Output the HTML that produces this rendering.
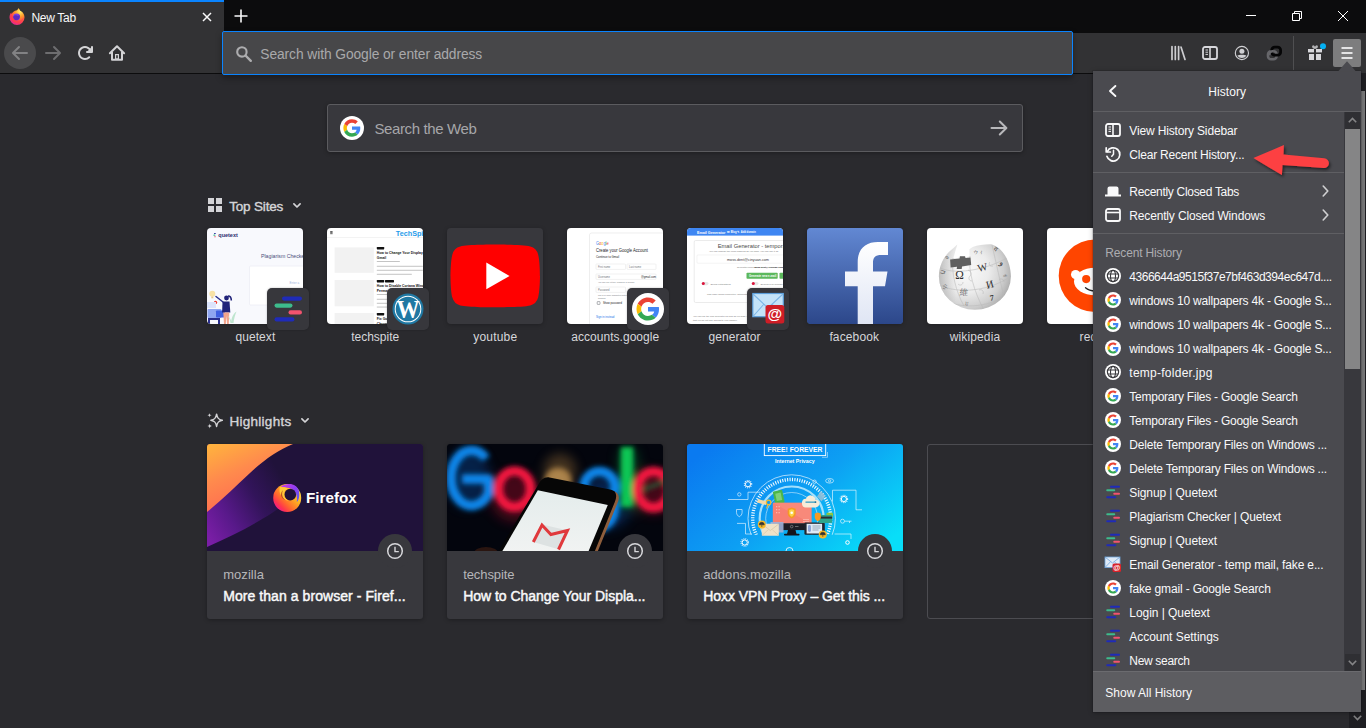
<!DOCTYPE html>
<html lang="en"><head><meta charset="utf-8"><title>New Tab</title>
<style>

html,body{margin:0;padding:0;}
body{width:1366px;height:728px;overflow:hidden;background:#2a2a2e;position:relative;font-family:"Liberation Sans",sans-serif;}
.a{position:absolute;}
.t{position:absolute;white-space:pre;line-height:1;font-family:"Liberation Sans",sans-serif;}
svg{position:absolute;overflow:visible;}

</style></head>
<body>
<!-- new tab page -->
<div class="a" style="left:0px;top:74px;width:1366px;height:654px;background:#2a2a2e;"></div>
<div class="a" style="left:327px;top:104px;width:696px;height:48px;box-sizing:border-box;background:#38383d;border:1px solid #5b5b5f;border-radius:3px;box-shadow:0 1px 4px rgba(0,0,0,.3)"></div>
<svg style="left:340px;top:116px" width="24" height="24" viewBox="0 0 48 48"><circle cx="24" cy="24" r="24" fill="#fff"/><g transform="translate(24 24) scale(0.72) translate(-24 -24)"><path fill="#EA4335" d="M24 9.500c3.540 0 6.710 1.220 9.210 3.600l6.850-6.850C35.900 2.380 30.470 0 24 0 14.620 0 6.510 5.380 2.560 13.220l7.980 6.190C12.430 13.720 17.740 9.500 24 9.500z"/><path fill="#4285F4" d="M46.980 24.550c0-1.570-.15-3.090-.38-4.550H24v9.020h12.940c-.58 2.960-2.260 5.480-4.780 7.180l7.730 6c4.510-4.180 7.090-10.360 7.090-17.650z"/><path fill="#FBBC05" d="M10.530 28.590c-.48-1.450-.76-2.990-.76-4.590s.27-3.140.76-4.590l-7.980-6.190C.92 16.460 0 20.120 0 24c0 3.880.92 7.540 2.560 10.780l7.970-6.190z"/><path fill="#34A853" d="M24 48c6.480 0 11.930-2.130 15.890-5.810l-7.730-6c-2.150 1.450-4.920 2.300-8.160 2.300-6.260 0-11.570-4.220-13.470-9.910l-7.980 6.190C6.510 42.620 14.620 48 24 48z"/></g></svg>
<span class="t" style="left:374.4px;top:120.80px;font-size:15px;color:#a6a6a9;letter-spacing:-0.364px;">Search the Web</span>
<svg style="left:990px;top:120px" width="18" height="16" viewBox="0 0 18 16"><path d="M1.500 8H16M9.800 1.500L16.400 8L9.800 14.500" stroke="#b8b8bb" stroke-width="2" fill="none" stroke-linecap="round" stroke-linejoin="round"/></svg>
<svg style="left:208px;top:198px" width="14" height="14" viewBox="0 0 14 14"><rect x="0" y="0" width="6" height="6" fill="#d4d4d7"/><rect x="8" y="0" width="6" height="6" fill="#d4d4d7"/><rect x="0" y="8" width="6" height="6" fill="#d4d4d7"/><rect x="8" y="8" width="6" height="6" fill="#d4d4d7"/></svg>
<span class="t" style="left:229.2px;top:199.97px;font-size:13.5px;color:#d4d4d7;letter-spacing:-0.170px;-webkit-text-stroke:.4px #d4d4d7;">Top Sites</span>
<svg style="left:292.800px;top:203.200px" width="8" height="5" viewBox="0 0 8 5"><path d="M0.900 0.900L4 4L7.100 0.900" stroke="#d4d4d7" stroke-width="1.700" fill="none" stroke-linecap="round" stroke-linejoin="round"/></svg>
<svg style="left:207px;top:413px" width="16" height="16" viewBox="0 0 16 16"><path d="M9.600 1.200C10.200 5.200 11.500 6.600 15.300 7.300C11.500 8 10.200 9.400 9.600 13.400C9 9.400 7.700 8 3.900 7.300C7.700 6.600 9 5.200 9.600 1.200Z" stroke="#d4d4d7" stroke-width="1.500" fill="none" stroke-linejoin="round"/>
<path d="M2.500 0C2.700 1.500 3.200 2 4.700 2.200C3.200 2.400 2.700 2.900 2.500 4.400C2.300 2.900 1.800 2.400.3 2.200C1.800 2 2.300 1.500 2.500 0Z" fill="#d4d4d7"/><path d="M2.700 10.600C2.900 12.300 3.500 12.800 5.200 13C3.500 13.200 2.900 13.800 2.700 15.500C2.500 13.800 1.900 13.200.2 13C1.900 12.800 2.500 12.300 2.700 10.600Z" fill="#d4d4d7"/></svg>
<span class="t" style="left:229.6px;top:414.97px;font-size:13.5px;color:#d4d4d7;letter-spacing:0.252px;-webkit-text-stroke:.4px #d4d4d7;">Highlights</span>
<svg style="left:301.100px;top:418.100px" width="8" height="5" viewBox="0 0 8 5"><path d="M0.900 0.900L4 4L7.100 0.900" stroke="#d4d4d7" stroke-width="1.700" fill="none" stroke-linecap="round" stroke-linejoin="round"/></svg>
<svg style="left:207px;top:228px;border-radius:4px;overflow:hidden;box-shadow:0 1px 4px rgba(0,0,0,.25);" width="96" height="96" viewBox="207 228 96 96"><rect x="207" y="228" width="96" height="96" fill="#f8f9fd"/>
<rect x="214" y="233" width="1.800" height="1.100" rx=".5" fill="#2a2fa0"/><rect x="213.400" y="234.600" width="2" height="1.100" rx=".5" fill="#3dbb8c"/><rect x="214.200" y="236.200" width="1.600" height="1.100" rx=".5" fill="#f2536f"/>
<text x="218.300" y="236.800" font-family="Liberation Sans, sans-serif" font-weight="700" font-size="6.200" fill="#2b2d6e" textLength="19.500" lengthAdjust="spacingAndGlyphs">quetext</text>
<text x="261" y="257.800" font-family="Liberation Sans, sans-serif" font-size="5.200" fill="#4a4f7c" textLength="45" lengthAdjust="spacingAndGlyphs">Plagiarism Checker</text>
<rect x="249.500" y="266" width="60" height="39" rx="1" fill="#ffffff" stroke="#eceef5" stroke-width=".8"/>
<text x="289.500" y="284.200" font-family="Liberation Sans, sans-serif" font-size="3" fill="#9fb4e0">Enter a</text>
<circle cx="212.300" cy="293.800" r="3" fill="#f8e2a6"/><rect x="211.300" y="296.500" width="2" height="1.800" fill="#e8c98a"/>
<circle cx="215.500" cy="302.500" r="1.700" fill="#ee4035"/>
<rect x="207" y="302" width="9" height="6" fill="#dbe4fb"/><rect x="207.500" y="309" width="14" height="9" rx="1" fill="#8fa6f0"/><rect x="216" y="310.500" width="9" height="7" rx=".8" fill="#3f5fe0"/>
<path d="M208 318h12v6h-2v-4h-8v4h-2z" fill="#2a2f8c"/>
<path d="M216 296.500l7 5.500" stroke="#2a2f8c" stroke-width="1.500" stroke-linecap="round"/>
<circle cx="226.500" cy="298" r="2.400" fill="#22247a"/><path d="M228 296c2 0 3.300 2 3.300 4.500" stroke="#22247a" stroke-width="1.600" fill="none"/>
<path d="M222.500 301.500h7l.8 11h-8.200z" fill="#22247a"/>
<path d="M223.300 312.500h6l-.5 11.500h-1.800l-.6-8-.6 8h-1.800z" fill="#f2a48c"/>
<path d="M231 323c.5-6 2.500-9.500 5.500-11.500-1.500 3.500-2.500 7-3 11.500zM230.500 323c-.5-3.500-1.500-5.500-3-7 2.300 1.200 3.600 3.500 4 7z" fill="#bfe5cf"/>
</svg>
<div class="a" style="left:267px;top:288px;width:42px;height:42px;border-radius:5px;background:#37373c;box-shadow:0 0 2px rgba(0,0,0,.3)"></div>
<svg style="left:272px;top:293px" width="32" height="32" viewBox="0 0 32 32"><rect x="10" y="3.500" width="20" height="4.200" rx="2.100" fill="#1f2bb8"/><rect x="2.500" y="10.500" width="18" height="4.200" rx="2.100" fill="#3dbb8c"/><rect x="16.500" y="17.300" width="13.500" height="4.200" rx="2.100" fill="#f2536f"/><rect x="2.500" y="24.300" width="20" height="4.200" rx="2.100" fill="#1f2bb8"/></svg>
<span class="t" style="left:235.4px;top:331.04px;font-size:12px;color:#d7d7db;letter-spacing:0.089px;">quetext</span>
<svg style="left:327px;top:228px;border-radius:4px;overflow:hidden;box-shadow:0 1px 4px rgba(0,0,0,.25);" width="96" height="96" viewBox="327 228 96 96"><rect x="327" y="228" width="96" height="96" fill="#fff"/>
<path d="M330.200 231.500h2.400M330.200 232.600h2.400M330.200 233.700h2.400" stroke="#222" stroke-width=".7"/>
<text x="395.800" y="235.600" font-family="Liberation Sans, sans-serif" font-weight="700" font-size="7.800" fill="#1f9be9" textLength="34" lengthAdjust="spacingAndGlyphs">TechSpite</text>
<rect x="327" y="237.200" width="96" height=".6" fill="#ececec"/>
<rect x="334.600" y="247.400" width="39.200" height="25.400" fill="#f2f2f2"/><rect x="334.600" y="280" width="39.200" height="26.300" fill="#f2f2f2"/><rect x="334.600" y="313" width="39.200" height="12" fill="#f2f2f2"/>
<rect x="376.800" y="247" width="7.400" height="2.400" rx=".6" fill="#111"/>
<text x="376.800" y="254.300" font-family="Liberation Sans, sans-serif" font-weight="700" font-size="3.400" fill="#111">How to Change Your Display Name in</text>
<text x="376.800" y="258.800" font-family="Liberation Sans, sans-serif" font-weight="700" font-size="3.400" fill="#111">Gmail</text>
<rect x="376.800" y="261" width="23" height="1" fill="#c4c4c4"/>
<rect x="376.800" y="265.800" width="46" height=".9" fill="#bdbdbd"/><rect x="376.800" y="269.800" width="46" height=".9" fill="#bdbdbd"/><rect x="376.800" y="273.800" width="35" height=".9" fill="#bdbdbd"/>
<rect x="376.800" y="280" width="7.400" height="2.400" rx=".6" fill="#111"/><rect x="385" y="280" width="9" height="2.400" rx=".6" fill="#111"/>
<text x="376.800" y="287.300" font-family="Liberation Sans, sans-serif" font-weight="700" font-size="3.400" fill="#111">How to Disable Cortana Windows 10</text>
<text x="376.800" y="291.600" font-family="Liberation Sans, sans-serif" font-weight="700" font-size="3.400" fill="#111">Permanently</text>
<rect x="376.800" y="294" width="12" height="1" fill="#c4c4c4"/>
<rect x="376.800" y="298.800" width="12" height=".9" fill="#bdbdbd"/><rect x="376.800" y="302.800" width="12" height=".9" fill="#bdbdbd"/><rect x="376.800" y="306.600" width="12" height=".9" fill="#bdbdbd"/>
<rect x="376.800" y="313" width="7.400" height="2.400" rx=".6" fill="#111"/>
<text x="376.800" y="320.300" font-family="Liberation Sans, sans-serif" font-weight="700" font-size="3.400" fill="#111">Fix Google</text>
<text x="376.800" y="324.500" font-family="Liberation Sans, sans-serif" font-weight="700" font-size="3.400" fill="#111">Chrome</text>
</svg>
<div class="a" style="left:387px;top:288px;width:42px;height:42px;border-radius:5px;background:#37373c;box-shadow:0 0 2px rgba(0,0,0,.3)"></div>
<svg style="left:392px;top:293px" width="32" height="32" viewBox="0 0 32 32"><circle cx="16" cy="16" r="15.500" fill="#1f78a3"/><circle cx="16" cy="16" r="13.300" fill="#fff"/><circle cx="16" cy="16" r="12.300" fill="#1f78a3"/>
<text x="16" y="25.300" text-anchor="middle" font-family="Liberation Serif, serif" font-weight="700" font-size="25" fill="#fff" textLength="23" lengthAdjust="spacingAndGlyphs">W</text></svg>
<span class="t" style="left:351.2px;top:331.04px;font-size:12px;color:#d7d7db;letter-spacing:-0.003px;">techspite</span>
<svg style="left:447px;top:228px;border-radius:4px;overflow:hidden;box-shadow:0 1px 4px rgba(0,0,0,.25);" width="96" height="96" viewBox="447 228 96 96"><rect x="447" y="228" width="96" height="96" fill="#38383d"/><g transform="translate(450.500 244.600) scale(3.133)"><path fill="#ff0000" d="M27.973 3.123A3.578 3.578 0 0 0 25.447.597C23.220 0 14.285 0 14.285 0S5.350 0 3.123.597A3.578 3.578 0 0 0 .597 3.123C0 5.350 0 10 0 10s0 4.650.597 6.877a3.578 3.578 0 0 0 2.526 2.526C5.350 20 14.285 20 14.285 20s8.935 0 11.162-.597a3.578 3.578 0 0 0 2.526-2.526C28.570 14.650 28.570 10 28.570 10s-.002-4.650-.597-6.877z"/><path fill="#fff" d="M11.425 14.285L18.848 10l-7.423-4.285z"/></g></svg>
<span class="t" style="left:473.2px;top:331.04px;font-size:12px;color:#d7d7db;letter-spacing:0.200px;">youtube</span>
<svg style="left:567px;top:228px;border-radius:4px;overflow:hidden;box-shadow:0 1px 4px rgba(0,0,0,.25);" width="96" height="96" viewBox="567 228 96 96"><rect x="567" y="228" width="96" height="96" fill="#fff"/>
<path d="M589.500 324V235a2 2 0 0 1 2-2H664" stroke="#e6e6e6" stroke-width=".7" fill="none"/>
<text x="596" y="244.600" font-family="Liberation Sans, sans-serif" font-size="4.600" textLength="12.600" lengthAdjust="spacingAndGlyphs"><tspan fill="#4285f4">G</tspan><tspan fill="#ea4335">o</tspan><tspan fill="#fbbc05">o</tspan><tspan fill="#4285f4">g</tspan><tspan fill="#34a853">l</tspan><tspan fill="#ea4335">e</tspan></text>
<text x="596" y="252" font-family="Liberation Sans, sans-serif" font-size="4.500" fill="#202124" textLength="52" lengthAdjust="spacingAndGlyphs">Create your Google Account</text>
<text x="596" y="257.500" font-family="Liberation Sans, sans-serif" font-size="2.900" fill="#202124">Continue to Gmail</text>
<rect x="596" y="264" width="29.500" height="5.400" rx=".6" fill="none" stroke="#e3e3e3" stroke-width=".5"/><rect x="627" y="264" width="29" height="5.400" rx=".6" fill="none" stroke="#e3e3e3" stroke-width=".5"/>
<text x="598" y="267.700" font-family="Liberation Sans, sans-serif" font-size="2.600" fill="#70757a">First name</text><text x="629" y="267.700" font-family="Liberation Sans, sans-serif" font-size="2.600" fill="#70757a">Last name</text>
<rect x="596" y="274" width="60" height="5.400" rx=".6" fill="none" stroke="#e3e3e3" stroke-width=".5"/>
<text x="598" y="277.700" font-family="Liberation Sans, sans-serif" font-size="2.600" fill="#70757a">Username</text><text x="641" y="277.700" font-family="Liberation Sans, sans-serif" font-size="2.700" fill="#202124">@gmail.com</text>
<text x="598" y="282.800" font-family="Liberation Sans, sans-serif" font-size="2.100" fill="#70757a">You can use letters, numbers &amp; periods</text>
<rect x="596" y="287" width="29.500" height="5.400" rx=".6" fill="none" stroke="#e3e3e3" stroke-width=".5"/>
<text x="598" y="290.700" font-family="Liberation Sans, sans-serif" font-size="2.600" fill="#70757a">Password</text>
<text x="598" y="295.800" font-family="Liberation Sans, sans-serif" font-size="2.100" fill="#70757a">Use 8 or more characters with a mix of letters, numbers &amp;</text>
<text x="598" y="298.800" font-family="Liberation Sans, sans-serif" font-size="2.100" fill="#70757a">symbols</text>
<rect x="597.200" y="301.600" width="2.800" height="2.800" rx=".4" fill="none" stroke="#5f6368" stroke-width=".5"/>
<text x="603" y="304" font-family="Liberation Sans, sans-serif" font-size="2.700" fill="#202124">Show password</text>
<text x="596" y="317.500" font-family="Liberation Sans, sans-serif" font-size="2.800" fill="#1a73e8">Sign in instead</text>
</svg>
<div class="a" style="left:627px;top:288px;width:42px;height:42px;border-radius:5px;background:#37373c;box-shadow:0 0 2px rgba(0,0,0,.3)"></div>
<svg style="left:632px;top:293px" width="32" height="32" viewBox="0 0 48 48"><circle cx="24" cy="24" r="24" fill="#fff"/><g transform="translate(24 24) scale(0.72) translate(-24 -24)"><path fill="#EA4335" d="M24 9.500c3.540 0 6.710 1.220 9.210 3.600l6.850-6.850C35.900 2.380 30.470 0 24 0 14.620 0 6.510 5.380 2.560 13.220l7.980 6.190C12.430 13.720 17.740 9.500 24 9.500z"/><path fill="#4285F4" d="M46.980 24.550c0-1.570-.15-3.090-.38-4.550H24v9.020h12.940c-.58 2.960-2.260 5.480-4.780 7.180l7.730 6c4.510-4.180 7.090-10.360 7.090-17.650z"/><path fill="#FBBC05" d="M10.530 28.590c-.48-1.450-.76-2.990-.76-4.590s.27-3.140.76-4.590l-7.980-6.190C.92 16.460 0 20.120 0 24c0 3.880.92 7.540 2.560 10.780l7.970-6.190z"/><path fill="#34A853" d="M24 48c6.480 0 11.930-2.130 15.890-5.810l-7.730-6c-2.150 1.450-4.920 2.300-8.160 2.300-6.260 0-11.570-4.220-13.470-9.910l-7.980 6.190C6.510 42.620 14.620 48 24 48z"/></g></svg>
<span class="t" style="left:571.3px;top:331.04px;font-size:12px;color:#d7d7db;letter-spacing:0.033px;">accounts.google</span>
<svg style="left:687px;top:228px;border-radius:4px;overflow:hidden;box-shadow:0 1px 4px rgba(0,0,0,.25);" width="96" height="96" viewBox="687 228 96 96"><rect x="687" y="228" width="96" height="96" fill="#fff"/>
<rect x="687" y="228" width="96" height="7.600" fill="#3e86f2"/>
<text x="697" y="233.500" font-family="Liberation Sans, sans-serif" font-weight="700" font-size="3.700" fill="#fff">Email Generator</text>
<text x="727" y="233.300" font-family="Liberation Sans, sans-serif" font-weight="700" font-size="2.600" fill="#fff">&#9993; Blog  &#9998; Add domain</text>
<rect x="694.200" y="240.500" width="100" height="62" rx="1.500" fill="#fff" stroke="#e2e2e2" stroke-width=".7"/>
<text x="717.700" y="247.600" font-family="Liberation Sans, sans-serif" font-size="5.700" fill="#4a4a4a" textLength="73" lengthAdjust="spacingAndGlyphs">Email Generator - temporary</text>
<text x="709" y="252" font-family="Liberation Sans, sans-serif" font-size="2.400" fill="#777">You can change the email address as you wish. You can use it as</text>
<rect x="697" y="255" width="94" height="8.200" rx=".8" fill="#fff" stroke="#ececec" stroke-width=".6"/>
<text x="727" y="260.600" font-family="Liberation Sans, sans-serif" font-size="3.300" fill="#333" textLength="42" lengthAdjust="spacingAndGlyphs">moss.dent@cinyuan.com</text>
<text x="737" y="268.400" font-family="Liberation Sans, sans-serif" font-size="2.400" fill="#777">generator.email/<tspan fill="#222" font-weight="700">moss.dent@cinyuan.com</tspan></text>
<rect x="746.500" y="272.800" width="31.200" height="5.900" rx=".8" fill="#5cb85c"/><rect x="779.500" y="272.800" width="12" height="5.900" rx=".8" fill="#5cb85c"/>
<text x="749" y="276.900" font-family="Liberation Sans, sans-serif" font-weight="700" font-size="2.800" fill="#fff">Generate new e-mail</text>
<rect x="701.500" y="282" width="7" height="3.200" rx="1.600" fill="#e6e6e6"/><circle cx="703.300" cy="283.600" r="1.500" fill="#dc143c"/>
<text x="710.500" y="284.500" font-family="Liberation Sans, sans-serif" font-size="2.400" fill="#777">Sound notifications</text>
<rect x="751.500" y="282" width="7" height="3.200" rx="1.600" fill="#e6e6e6"/><circle cx="753.300" cy="283.600" r="1.500" fill="#dc143c"/>
<text x="760.500" y="284.500" font-family="Liberation Sans, sans-serif" font-size="2.400" fill="#777">Second level domain</text>
<text x="707" y="295" font-family="Liberation Sans, sans-serif" font-size="2.400" fill="#777">This page works completely automatically</text>
<text x="693" y="316.800" font-family="Liberation Sans, sans-serif" font-size="2.300" fill="#777">You can use the mail generator as long as you wish, provided</text>
<text x="693" y="320.800" font-family="Liberation Sans, sans-serif" font-size="2.300" fill="#777">that you do not lose access to your mailbox</text>
</svg>
<div class="a" style="left:747px;top:288px;width:42px;height:42px;border-radius:5px;background:#37373c;box-shadow:0 0 2px rgba(0,0,0,.3)"></div>
<svg style="left:752px;top:293px" width="33" height="31" viewBox="752 293 33 31">
<rect x="752.800" y="293.500" width="30.500" height="23.200" fill="#c4e3f8" stroke="#5d9fda" stroke-width="1.200"/>
<path d="M753 294L768 308L783 294M753 316.500L764 304M783 316.500L772 304" stroke="#7db5e6" stroke-width="1.100" fill="none"/>
<rect x="765.500" y="305" width="18.800" height="18.500" rx="2.500" fill="#cf1d26"/>
<text x="774.900" y="319.300" text-anchor="middle" font-family="Liberation Sans, sans-serif" font-weight="700" font-size="15" fill="#fff">@</text></svg>
<span class="t" style="left:708.5px;top:331.04px;font-size:12px;color:#d7d7db;letter-spacing:0.069px;">generator</span>
<svg style="left:807px;top:228px;border-radius:4px;overflow:hidden;box-shadow:0 1px 4px rgba(0,0,0,.25);" width="96" height="96" viewBox="807 228 96 96"><rect x="807" y="228" width="96" height="96" fill="#3b5998"/><defs><linearGradient id="fbg" x1="0" y1="0" x2="0" y2="1"><stop offset="0" stop-color="#6288d3"/><stop offset="1" stop-color="#2c478a"/></linearGradient>
<linearGradient id="fbf" x1="0" y1="0" x2="0" y2="1"><stop offset="0" stop-color="#ffffff"/><stop offset="1" stop-color="#dfe5f4"/></linearGradient></defs>
<rect x="807" y="228" width="96" height="96" fill="url(#fbg)"/>
<path fill="url(#fbf)" d="M857.700 325V286.300H845V271.500H857.700V262C857.700 248.500 866 242 878 242H888V255H881.500C875 255 873 257.500 873 263V271.500H887.500L885 286.300H873V325Z"/></svg>
<span class="t" style="left:829.4px;top:331.04px;font-size:12px;color:#d7d7db;letter-spacing:0.137px;">facebook</span>
<svg style="left:927px;top:228px;border-radius:4px;overflow:hidden;box-shadow:0 1px 4px rgba(0,0,0,.25);" width="96" height="96" viewBox="927 228 96 96"><rect x="927" y="228" width="96" height="96" fill="#fff"/><defs><radialGradient id="wkg" gradientUnits="userSpaceOnUse" cx="966" cy="270" r="50"><stop offset="0" stop-color="#fafafa"/><stop offset="0.450" stop-color="#ececec"/><stop offset="0.750" stop-color="#cfcfcf"/><stop offset="1" stop-color="#a2a2a2"/></radialGradient>
<linearGradient id="wkl" gradientUnits="userSpaceOnUse" x1="938" y1="0" x2="956" y2="0"><stop offset="0" stop-color="#b0b0b0" stop-opacity=".75"/><stop offset="1" stop-color="#b0b0b0" stop-opacity="0"/></linearGradient>
<clipPath id="wkc"><path d="M938.900 276.500C938.900 266 944 255 953 248.500L957.300 244.600L953.400 258H958L959.500 256H965.500L966 257.500L969.400 256V249.200L972.700 247C978 245 985 244 991.300 244.200C1003 247.500 1010.900 262 1010.900 276.500A36 33.300 0 0 1 938.900 276.500Z"/></clipPath></defs>
<g clip-path="url(#wkc)">
<rect x="930" y="236" width="90" height="80" fill="url(#wkg)"/>
<rect x="930" y="236" width="30" height="80" fill="url(#wkl)"/>
<g fill="none" stroke="#b9b9b9" stroke-width=".55">
<path d="M940 268C958 276 992 268 1010 256M939 285C960 295 992 290 1011 276M946 301C965 310 992 306 1008 294"/>
<path d="M970 256C968 270 974 292 984 310M992 245C996 262 1001 286 1005 300M953 258C951 272 956 292 964 306"/>
<path d="M968 270c3 1 4 4 2 6s-1 5 2 5M990 262c-2 2 0 5 3 4M979 290c3-1 5 1 4 4M999 280c2-2 5-1 5 2M958 284c2 2 5 1 5-2"/>
</g>
<path d="M950.100 259.600L959.500 258.600L960 256.300H965L965.500 258L970.500 257.400L971.200 265L962 266.500L961.700 269H956.700L957 266.800L950.600 267.500Z" fill="#606060"/>
<g font-family="Liberation Serif, 'Noto Serif CJK SC', serif" fill="#2e2e2e">
<text x="955.300" y="279.400" font-size="11.500">&#937;</text>
<text x="977.300" y="271" font-size="10.500" transform="rotate(-14 982 267)">W</text>
<text x="985.600" y="287.800" font-size="10.500" transform="rotate(-14 990 283)">&#1048;</text>
<text x="959.500" y="295.300" font-size="8.500" fill="#666" transform="rotate(6 963 293)">&#32173;</text>
<text x="989.800" y="300.500" font-size="8" font-weight="700" transform="rotate(-8 992 297)">7</text>
<text x="973" y="254.500" font-size="5.500" fill="#555" transform="rotate(-6 976 252)">&#12454;&#12451;</text>
<text x="1000.500" y="265.500" font-size="8" fill="#444" transform="rotate(25 1003 262)">&#1608;</text>
<text x="993.500" y="251.500" font-size="6.500" fill="#555" transform="rotate(30 996 249)">&#2357;</text>
<text x="940.500" y="274.500" font-size="6" fill="#666" transform="rotate(-70 943 272)">&#1329;</text>
<text x="942" y="289.500" font-size="6" fill="#666" transform="rotate(-60 945 287)">&#20013;</text>
<text x="944" y="258" font-size="6" fill="#666" transform="rotate(-50 947 256)">&#3592;</text>
<text x="1004" y="278" font-size="6" fill="#777" transform="rotate(70 1006 276)">&#3221;</text>
<text x="965" y="305.500" font-size="6" fill="#777" transform="rotate(10 968 304)">&#1506;</text>
</g></g></svg>
<span class="t" style="left:949.8px;top:331.04px;font-size:12px;color:#d7d7db;letter-spacing:0.116px;">wikipedia</span>
<svg style="left:1047px;top:228px;border-radius:4px;overflow:hidden;box-shadow:0 1px 4px rgba(0,0,0,.25);" width="96" height="96" viewBox="1047 228 96 96"><rect x="1047" y="228" width="96" height="96" fill="#fff"/><circle cx="1095" cy="275.800" r="36.300" fill="#ff4500"/>
<circle cx="1075.600" cy="274.600" r="4.600" fill="#fff"/>
<ellipse cx="1095" cy="281.500" rx="21" ry="13.800" fill="#fff"/>
<circle cx="1086.200" cy="279.100" r="4.100" fill="#ff4500"/>
<path d="M1085.500 287.800c2.500 2.200 6 3.200 9.500 3.200" stroke="#222" stroke-width="1.300" fill="none" stroke-linecap="round"/></svg>
<span class="t" style="left:1079.6px;top:331.04px;font-size:12px;color:#d7d7db;letter-spacing:0.128px;">reddit</span>
<div class="a" style="left:207px;top:444px;width:216px;height:175px;border-radius:3px;background:#38383d;box-shadow:0 1px 4px rgba(0,0,0,.3)"></div>
<div class="a" style="left:447px;top:444px;width:216px;height:175px;border-radius:3px;background:#38383d;box-shadow:0 1px 4px rgba(0,0,0,.3)"></div>
<div class="a" style="left:687px;top:444px;width:216px;height:175px;border-radius:3px;background:#38383d;box-shadow:0 1px 4px rgba(0,0,0,.3)"></div>
<div class="a" style="left:927px;top:444px;width:216px;height:175px;box-sizing:border-box;border-radius:3px;border:1px solid #4c4c51"></div>
<svg style="left:207px;top:444px;border-radius:3px 3px 0 0;overflow:hidden" width="216" height="107" viewBox="207 444 216 107"><defs>
<linearGradient id="c1o" x1="0" y1="0" x2="0.550" y2="1"><stop offset="0" stop-color="#ffb53d"/><stop offset="0.45" stop-color="#ff8a4d"/><stop offset="1" stop-color="#ff6252"/></linearGradient>
<linearGradient id="c1p" gradientUnits="userSpaceOnUse" x1="207" y1="535" x2="288" y2="487"><stop offset="0" stop-color="#7a1ea6"/><stop offset="0.300" stop-color="#58198a"/><stop offset="0.650" stop-color="#32145a"/><stop offset="1" stop-color="#20123a"/></linearGradient>
<filter id="c1b" filterUnits="userSpaceOnUse" x="170" y="410" width="190" height="150"><feGaussianBlur stdDeviation="6"/></filter>
<linearGradient id="fxl" gradientUnits="userSpaceOnUse" x1="298" y1="488" x2="277" y2="509"><stop offset="0" stop-color="#ffe24a"/><stop offset="0.350" stop-color="#ffae22"/><stop offset="0.650" stop-color="#ff6a2c"/><stop offset="0.850" stop-color="#ff3350"/><stop offset="1" stop-color="#f2198c"/></linearGradient>
<linearGradient id="fxp" gradientUnits="userSpaceOnUse" x1="282" y1="485" x2="299" y2="500"><stop offset="0" stop-color="#c63ae6"/><stop offset="0.550" stop-color="#8a3df2"/><stop offset="1" stop-color="#5a5cf0"/></linearGradient>
</defs>
<rect x="207" y="444" width="216" height="107" fill="#20123a"/>
<path d="M207 547C232 536 255 524 272 513C290 501 300 488 312 470L320 444H207Z" fill="url(#c1p)"/>
<path d="M207 512C222 500 236 486 250 473C264 460 278 450 293 444H207Z" fill="url(#c1o)"/>
<circle cx="287.200" cy="498" r="14" fill="url(#fxl)"/>
<path d="M280.500 486.800C285 483.400 291.500 483.200 295.500 486C299 488.600 300 493 299 497.800C298.500 499.800 297.800 501 296.800 502C297.400 497.500 296.600 493 293.500 490.200C290 487.300 285 487.600 280.500 486.800Z" fill="url(#fxp)"/>
<circle cx="290.200" cy="494.700" r="5.900" fill="#20123a"/>
<path d="M280 486.800C283 487 285.800 487.400 287.800 488.600C285.600 489.700 284.200 491.800 284.300 494.300C284.400 497.300 286.300 499.800 289 500.700C285.500 500.800 282.300 498.300 282 494.500C281.900 493 282.200 491.600 282.800 490.400C281.600 491.600 280.900 493.400 281 495.500C279.300 492.800 279.100 489.500 280 486.800Z" fill="#ffc838"/>
<path d="M282.900 490.300C282.300 491.600 282 493 282.100 494.500C282.300 497 283.600 499 285.500 500.100C283.500 499.600 281.500 497.800 281 495.500C280.900 493.500 281.600 491.600 282.900 490.300Z" fill="#7a2a20" opacity=".55"/>
<text x="306" y="503.300" font-family="Liberation Sans, sans-serif" font-weight="700" font-size="15.300" fill="#fff" textLength="50.700" lengthAdjust="spacingAndGlyphs">Firefox</text></svg>
<svg style="left:447px;top:444px;border-radius:3px 3px 0 0;overflow:hidden" width="216" height="107" viewBox="447 444 216 107"><defs><filter id="bl" x="-20%" y="-20%" width="140%" height="140%"><feGaussianBlur stdDeviation="2.900"/></filter>
<filter id="bl2" x="-40%" y="-40%" width="180%" height="180%"><feGaussianBlur stdDeviation="6"/></filter>
<linearGradient id="scr" x1="0" y1="0" x2="0" y2="1"><stop offset="0" stop-color="#e4ecec"/><stop offset="1" stop-color="#f1f3f2"/></linearGradient></defs>
<rect x="447" y="444" width="216" height="107" fill="#03050d"/>
<g filter="url(#bl2)" opacity=".38"><ellipse cx="468" cy="478" rx="22" ry="30" fill="#0a4fa8"/><circle cx="515" cy="497" r="25" fill="#b0102c"/><circle cx="606" cy="502" r="27" fill="#0a50b0"/><circle cx="653" cy="492" r="22" fill="#b0102c"/><rect x="618" y="450" width="20" height="60" fill="#008838"/><circle cx="560" cy="470" r="16" fill="#b08040"/></g>
<g filter="url(#bl)" fill="none" stroke-linecap="butt">
<path d="M486 458.500A20.500 27.500 0 1 0 488.500 493.500V479H462" stroke="#0b86ea" stroke-width="9.500" stroke-linejoin="round"/>
<ellipse cx="514.500" cy="489" rx="16" ry="18" stroke="#f3153f" stroke-width="9.500"/>
<circle cx="558" cy="481.500" r="12" fill="#c89a58" stroke="#b88a4a" stroke-width="4" opacity=".8"/>
<circle cx="599.500" cy="487" r="15.500" stroke="#0b86ea" stroke-width="9.500"/>
<path d="M613 500C617 512 612 524 600 528" stroke="#0b86ea" stroke-width="9.500"/>
<path d="M627 447V507" stroke="#07c654" stroke-width="12.500"/>
<ellipse cx="653.500" cy="489.500" rx="16" ry="18" stroke="#f3153f" stroke-width="9.500"/>
<path d="M642 490L666 481" stroke="#2a5a34" stroke-width="4"/>
</g>
<path d="M498 552L538.500 484.500C541 479.500 544.500 476.500 549.500 477.400L610 489.500C617 491 619.500 495.500 617 502L596 552Z" fill="#060606"/>
<path d="M614.500 491.500C619 493.500 620 497.500 617.500 503L597.500 552H594.500L615 501.500C616.800 497 616.300 493.500 614.500 491.500Z" fill="#8d5d3c"/>
<path d="M501.800 552L537.800 490.200L607.800 505L588.200 552Z" fill="url(#scr)"/>
<path d="M542 524.500L568 530.500L558.500 549.300L533.300 542Z" fill="#dde2e2"/>
<path d="M533.300 542L542 525L550.900 534.500L567.500 530.500L558.500 549.500" stroke="#e0393c" stroke-width="3" fill="none" stroke-linejoin="miter" stroke-miterlimit="3"/>
<ellipse cx="486" cy="553" rx="12" ry="6" fill="#2a1510"/></svg>
<svg style="left:687px;top:444px;border-radius:3px 3px 0 0;overflow:hidden" width="216" height="107" viewBox="687 444 216 107"><defs><linearGradient id="c3g" x1="0" y1="0.200" x2="1" y2="0.800"><stop offset="0" stop-color="#0a7af0"/><stop offset="0.500" stop-color="#0d9ff3"/><stop offset="1" stop-color="#08def8"/></linearGradient>
<clipPath id="dial"><rect x="740" y="470" width="104" height="64.800"/></clipPath></defs>
<rect x="687" y="444" width="216" height="107" fill="url(#c3g)"/>
<rect x="764.300" y="441" width="61.400" height="14.600" fill="none" stroke="#fff" stroke-width=".9"/>
<path d="M827.500 452V457.300H822" stroke="#fff" stroke-width=".6" fill="none" opacity=".8"/>
<text x="767.500" y="452" font-family="Liberation Sans, sans-serif" font-weight="700" font-size="6.400" fill="#fff" textLength="55" lengthAdjust="spacingAndGlyphs">FREE!  FOREVER</text>
<text x="775" y="463" font-family="Liberation Sans, sans-serif" font-weight="700" font-size="4.800" fill="#fff" textLength="39.600" lengthAdjust="spacingAndGlyphs">Internet Privacy</text>
<g clip-path="url(#dial)" fill="none">
<circle cx="791.700" cy="518.500" r="43.700" stroke="#fff" stroke-width=".7" opacity=".9"/>
<circle cx="791.700" cy="518.500" r="39" stroke="#fff" stroke-width="3.400" stroke-dasharray="1.100 1.350" opacity=".95"/>
<circle cx="791.700" cy="518.500" r="32" stroke="#c9f0ff" stroke-width="2.200" opacity=".8"/>
<circle cx="791.700" cy="518.500" r="26" stroke="#fff" stroke-width=".7" opacity=".7"/>
</g>
<g fill="none" stroke="#fff" stroke-width=".7" opacity=".85">
<path d="M728 499.500H748V492.200H760M737 523.400H745.500V534H752M832.500 501.600V490.200H856V509.800H862M834.600 534H851V539"/>
<circle cx="739.300" cy="494.400" r="1.700"/><circle cx="814.600" cy="481.700" r="1.700"/>
<ellipse cx="829.600" cy="480.800" rx="4" ry="2.300"/><circle cx="829.600" cy="480.800" r="1.100"/>
<path d="M736.500 509.500h5.600v3c0 2-1.400 3.600-2.800 4.200-1.400-.6-2.800-2.200-2.800-4.200z"/>
<circle cx="842.500" cy="521.200" r="2"/><path d="M844.500 521.200H851.500M849.500 521.200V523"/>
</g>
<g fill="none" stroke="#fff" stroke-width="1"><circle cx="748" cy="484.200" r="2.600"/><circle cx="843.900" cy="499" r="2.600"/><circle cx="744.700" cy="542.500" r="2.600"/><circle cx="847.500" cy="542.500" r="1.800"/></g>
<g fill="none" stroke="#fff" stroke-width="1.100" stroke-dasharray=".9 1.060" opacity=".95"><circle cx="748" cy="484.200" r="3.700"/><circle cx="843.900" cy="499" r="3.700"/><circle cx="744.700" cy="542.500" r="3.700"/></g>
<rect x="774" y="490.500" width="9.500" height="13" rx="1" fill="#4cb648" transform="rotate(-12 779 497)"/><rect x="776" y="493" width="5.500" height="7.500" fill="#7fd07a" transform="rotate(-12 779 497)"/>
<path d="M758 499l9 2.500-1 3.500-9-2.500z" fill="#f3d9a8"/><circle cx="768.600" cy="502.400" r="2.200" fill="none" stroke="#f5b92a" stroke-width="1.200"/><path d="M768 504.500l-1.500 4" stroke="#f5b92a" stroke-width="1.100"/>
<path d="M821 491l4.500 5-4 5.500-4.500-5z" fill="#8fbfd8" opacity=".9"/>
<rect x="772.800" y="502.800" width="38.700" height="21" rx="1" fill="#f77f72"/><path d="M772.800 502.800h38.700v21z" fill="#f98f80" opacity=".6"/>
<g fill="#fbb4aa"><rect x="776" y="506" width="1.300" height="1.300"/><rect x="778.500" y="506" width="1.300" height="1.300"/><rect x="776" y="509" width="1.300" height="1.300"/><rect x="778.500" y="509" width="1.300" height="1.300"/><rect x="776" y="512" width="1.300" height="1.300"/><rect x="778.500" y="512" width="1.300" height="1.300"/><rect x="803" y="519" width="6" height=".9"/><rect x="803" y="521" width="6" height=".9"/></g>
<path d="M787.700 508.800l4-1.300 4 1.300v4.600c0 2.400-1.900 4.200-4 5.200-2.100-1-4-2.800-4-5.200z" fill="#f59a23"/><path d="M789.200 510l2.500-.8 2.500.8v3.300c0 1.600-1.200 2.800-2.500 3.500-1.300-.7-2.500-1.900-2.500-3.500z" fill="#fbd34a"/><circle cx="791.700" cy="512.800" r="1.300" fill="#fff"/>
<rect x="772.800" y="523.300" width="38.700" height="6.800" fill="#1d1e26"/><circle cx="791.700" cy="526.600" r="1.300" fill="none" stroke="#aaa" stroke-width=".5"/><rect x="795" y="526.200" width="3.500" height=".7" fill="#888"/>
<path d="M788 530h7.500l1 4h-9.500z" fill="#15161c"/><rect x="784" y="533.800" width="15.500" height="1.700" rx=".8" fill="#15161c"/>
<g transform="translate(0.500 -2.200)"><path d="M801.500 504.500c0-2.300 1.900-3.900 4-3.600.7-2.200 2.900-3.600 5.200-3.300 2.400.3 4.200 2.100 4.500 4.400 2.100.1 3.700 1.800 3.700 3.800 0 2.100-1.700 3.800-3.900 3.800h-10c-2 0-3.500-1.500-3.500-3.400z" fill="#f6ecd9"/><rect x="805" y="503.700" width="10" height="1.300" fill="#3b9fc4"/><circle cx="815" cy="504.300" r=".9" fill="#1d6f94"/></g>
<rect x="770.500" y="522" width="13" height="10.500" fill="#9fb0d8" opacity=".9"/>
<rect x="761.800" y="523.700" width="17" height="12" rx=".8" fill="#efe2c8"/><path d="M761.800 524l8.500 6.500 8.500-6.500" stroke="#d6c4a2" stroke-width=".7" fill="none"/><path d="M761.800 535.700l6.500-6M778.800 535.700l-6.500-6" stroke="#d6c4a2" stroke-width=".6"/>
<rect x="804.400" y="522.500" width="20.400" height="12.300" rx="1.200" fill="#22252e"/><rect x="806.600" y="523.800" width="15.500" height="9.700" fill="#dfe9f5"/><rect x="808" y="525" width="3" height="7" rx="1.400" fill="#8fa6d8"/><rect x="812.500" y="525.500" width="8" height="1" fill="#9ab"/><rect x="812.500" y="527.500" width="8" height="1" fill="#9ab"/><rect x="812.500" y="529.500" width="6" height="1" fill="#9ab"/>
<rect x="826.500" y="512.800" width="6.500" height="4" rx=".8" fill="#8cc63f"/><rect x="818.800" y="515" width="13.400" height="8" rx=".9" fill="#2fa58c"/><rect x="818.800" y="516.600" width="13.400" height="2" fill="#2a2d36"/>
<path d="M814.800 513.500l3-1 3 1v3.800c0 1.900-1.500 3.300-3 4-1.500-.7-3-2.100-3-4z" fill="#f59a23"/>
<circle cx="761.800" cy="524.600" r="4" fill="#f5b92a"/><path d="M759.300 524.800a2.500 2.500 0 0 1 5 0zM761.800 524.800v2.200" stroke="#333" stroke-width=".6" fill="#333"/>
<circle cx="822.800" cy="534.500" r="4" fill="#f5b92a"/><path d="M820.300 534.700a2.500 2.500 0 0 1 5 0zM822.800 534.700v2.200" stroke="#333" stroke-width=".6" fill="#333"/>
<path d="M786 551a3.500 3.500 0 0 1 7 0" stroke="#fff" stroke-width=".8" fill="none"/></svg>
<div class="a" style="left:378px;top:534px;width:34px;height:34px;border-radius:50%;background:#38383d;clip-path:inset(0 0 0 0)"></div><svg style="left:386px;top:542px" width="18" height="18" viewBox="0 0 18 18"><circle cx="9" cy="9" r="7.300" stroke="#d7d7db" stroke-width="1.500" fill="none"/><path d="M9 4.800V9.600H12.800" stroke="#d7d7db" stroke-width="1.400" fill="none"/></svg>
<div class="a" style="left:618px;top:534px;width:34px;height:34px;border-radius:50%;background:#38383d;clip-path:inset(0 0 0 0)"></div><svg style="left:626px;top:542px" width="18" height="18" viewBox="0 0 18 18"><circle cx="9" cy="9" r="7.300" stroke="#d7d7db" stroke-width="1.500" fill="none"/><path d="M9 4.800V9.600H12.800" stroke="#d7d7db" stroke-width="1.400" fill="none"/></svg>
<div class="a" style="left:858px;top:534px;width:34px;height:34px;border-radius:50%;background:#38383d;clip-path:inset(0 0 0 0)"></div><svg style="left:866px;top:542px" width="18" height="18" viewBox="0 0 18 18"><circle cx="9" cy="9" r="7.300" stroke="#d7d7db" stroke-width="1.500" fill="none"/><path d="M9 4.800V9.600H12.800" stroke="#d7d7db" stroke-width="1.400" fill="none"/></svg>
<span class="t" style="left:223.2px;top:568.30px;font-size:13px;color:#b6b6b9;letter-spacing:0.047px;">mozilla</span>
<span class="t" style="left:223.2px;top:589.15px;font-size:14px;color:#f9f9fa;letter-spacing:0.066px;-webkit-text-stroke:.45px #f9f9fa;">More than a browser - Firef...</span>
<span class="t" style="left:463.2px;top:568.30px;font-size:13px;color:#b6b6b9;letter-spacing:-0.094px;">techspite</span>
<span class="t" style="left:463.2px;top:589.15px;font-size:14px;color:#f9f9fa;letter-spacing:-0.025px;-webkit-text-stroke:.45px #f9f9fa;">How to Change Your Displa...</span>
<span class="t" style="left:703.2px;top:568.30px;font-size:13px;color:#b6b6b9;letter-spacing:0.077px;">addons.mozilla</span>
<span class="t" style="left:703.2px;top:589.15px;font-size:14px;color:#f9f9fa;letter-spacing:-0.063px;-webkit-text-stroke:.45px #f9f9fa;">Hoxx VPN Proxy – Get this ...</span>
<!-- browser chrome -->
<div class="a" style="left:0px;top:0px;width:1366px;height:33px;background:#0c0c0d;"></div>
<div class="a" style="left:0px;top:33px;width:1366px;height:41px;background:#323234;border-bottom:1px solid #0c0c0d;box-sizing:border-box;"></div>
<div class="a" style="left:0px;top:0px;width:224px;height:33px;background:#323234;border-top:2px solid #0a84ff;box-sizing:border-box;"></div>
<svg style="left:9px;top:8px" width="16" height="17" viewBox="0 0 16 17">
<defs><radialGradient id="ffg" cx="0.7" cy="0.2" r="0.9"><stop offset="0" stop-color="#fff36b"/><stop offset="0.35" stop-color="#ff9a2a"/><stop offset="0.7" stop-color="#ff3e4e"/><stop offset="1" stop-color="#e5259a"/></radialGradient></defs>
<path d="M8 2.2c1-.9 1.3-1.7 1.4-2.2 1 .9 1.6 2 1.8 2.8 1.500 .3 4.300 2.800 4.300 6.700a7.500 7.500 0 0 1-15 0c0-2.300.9-4.100 1.700-5 .1.700.3 1.200.6 1.600C3.300 4.300 5 2.600 8 2.200z" fill="url(#ffg)"/>
<circle cx="7.6" cy="9" r="3.4" fill="#7b3fe4"/><path d="M4.200 8.800c.8-1.500 2.400-1.800 3.600-1.300 1.200.5 2.300.2 2.800-.4.700 2.400-.800 5.200-3.600 5.200-2 0-3.200-1.600-2.800-3.500z" fill="#5b2bbf"/>
<path d="M1.200 8.500c.5 3.600 3.300 6.000 6.800 6.000 3.600 0 6.400-2.400 7-5.500-1 2.300-3 3.800-5.800 3.800-3.200 0-5.200-2-5.400-4.600-.5-.6-1.800-.6-2.600.3z" fill="#ff3e4e" opacity=".85"/>
</svg>
<span class="t" style="left:31.4px;top:12.14px;font-size:12px;color:#f9f9fa;letter-spacing:-0.298px;">New Tab</span>
<svg style="left:202px;top:12px" width="10" height="10" viewBox="0 0 10 10"><path d="M1 1L9 9M9 1L1 9" stroke="#f9f9fa" stroke-width="1.5" fill="none"/></svg>
<svg style="left:234px;top:9px" width="14" height="14" viewBox="0 0 14 14"><path d="M7 0.500V13.500M0.500 7H13.500" stroke="#f9f9fa" stroke-width="1.6" fill="none"/></svg>
<svg style="left:1246px;top:11px" width="10" height="10" viewBox="0 0 10 10"><path d="M0 4.500H10" stroke="#fff" stroke-width="1"/></svg>
<svg style="left:1292px;top:11px" width="10" height="10" viewBox="0 0 10 10"><path d="M0.500 2.500H7.500V9.500H0.500ZM2.500 2.500V0.500H9.500V7.500H7.500" stroke="#fff" stroke-width="1" fill="none"/></svg>
<svg style="left:1338px;top:11px" width="10" height="10" viewBox="0 0 10 10"><path d="M0 0L10 10M10 0L0 10" stroke="#fff" stroke-width="1" fill="none"/></svg>
<div class="a" style="left:4px;top:37px;width:32px;height:32px;border-radius:50%;background:#4a4a4c"></div>
<svg style="left:12px;top:45px" width="16" height="16" viewBox="0 0 16 16"><path fill="#828284" d="M15 7H3.414l4.293-4.293a1 1 0 0 0-1.414-1.414l-6 6a1 1 0 0 0 0 1.414l6 6a1 1 0 0 0 1.414-1.414L3.414 9H15a1 1 0 0 0 0-2z"/></svg>
<svg style="left:45px;top:45px" width="16" height="16" viewBox="0 0 16 16"><path fill="#6e6e70" transform="translate(16 0) scale(-1 1)" d="M15 7H3.414l4.293-4.293a1 1 0 0 0-1.414-1.414l-6 6a1 1 0 0 0 0 1.414l6 6a1 1 0 0 0 1.414-1.414L3.414 9H15a1 1 0 0 0 0-2z"/></svg>
<svg style="left:77.300px;top:45px" width="16" height="16" viewBox="0 0 16 16"><path fill="#d4d4d6" d="M15 1a1 1 0 0 0-1 1v2.418A6.995 6.995 0 1 0 8 15a6.954 6.954 0 0 0 4.950-2.050 1 1 0 0 0-1.414-1.414A5.019 5.019 0 1 1 12.549 6H10a1 1 0 0 0 0 2h5a1 1 0 0 0 1-1V2a1 1 0 0 0-1-1z"/><path d="M15.300 1.200V7.300H9.500Z" fill="#d4d4d6"/></svg>
<svg style="left:109px;top:45px" width="16" height="16" viewBox="0 0 16 16"><path d="M0.900 8.200L8 1.200L15.100 8.200" stroke="#d4d4d6" stroke-width="2" fill="none" stroke-linecap="round" stroke-linejoin="round"/><path d="M3 7V14.700H13V7" stroke="#d4d4d6" stroke-width="2" fill="none" stroke-linejoin="round"/><rect x="6.600" y="9.600" width="2.800" height="4.300" stroke="#d4d4d6" stroke-width="1.200" fill="none"/></svg>
<div class="a" style="left:222px;top:31px;width:851px;height:44px;box-sizing:border-box;background:#474749;border:1px solid #0a84ff;border-radius:2px;box-shadow:0 3px 6px rgba(0,0,0,.35)"></div>
<svg style="left:236px;top:46px" width="16" height="16" viewBox="0 0 16 16"><circle cx="5.900" cy="5.900" r="4.700" stroke="#adadaf" stroke-width="2.100" fill="none"/><path d="M9.500 9.500L14.800 14.800" stroke="#adadaf" stroke-width="2.400" stroke-linecap="round"/></svg>
<span class="t" style="left:260.3px;top:48.22px;font-size:13.8px;color:#a9a9ab;letter-spacing:-0.081px;">Search with Google or enter address</span>
<svg style="left:1170px;top:45px" width="16" height="16" viewBox="0 0 16 16"><path d="M2 1.500V14.500M5.300 1.500V14.500M8.600 1.500V14.500M11 2L15 14.500" stroke="#cdcdd0" stroke-width="1.700" fill="none" stroke-linecap="round"/></svg>
<svg style="left:1202px;top:46px" width="16" height="14" viewBox="0 0 16 14"><rect x="1" y="1" width="14" height="12" rx="2" stroke="#d7d7db" stroke-width="1.800" fill="none"/><path d="M8 1V13" stroke="#d7d7db" stroke-width="1.600"/><path d="M3.500 4H6M3.500 6.200H6M3.500 8.400H6" stroke="#d7d7db" stroke-width="1"/></svg>
<svg style="left:1234px;top:45px" width="16" height="16" viewBox="0 0 16 16"><circle cx="7.900" cy="8" r="6.600" stroke="#d0d0d3" stroke-width="1.100" fill="none"/><circle cx="7.900" cy="6.300" r="2.500" fill="#d0d0d3"/><path d="M3.400 10.700C5 9.300 10.800 9.300 12.400 10.700A5.400 5.400 0 0 1 3.400 10.700Z" fill="#d0d0d3"/></svg>
<svg style="left:1266px;top:45px" width="17" height="16" viewBox="0 0 17 16"><rect x="2" y="6.200" width="8.600" height="8.100" rx="3" stroke="#66666a" stroke-width="2.600" fill="none"/><rect x="5.700" y="2.100" width="8.900" height="8.100" rx="3" stroke="#050506" stroke-width="2.800" fill="none"/><path d="M3.300 10.300V9.200A3 3 0 0 1 6.300 6.200H7.500" stroke="#66666a" stroke-width="2.600" fill="none"/></svg>
<div class="a" style="left:1293px;top:36px;width:1px;height:34px;background:#4f4f51;"></div>
<svg style="left:1307px;top:44px" width="18" height="18" viewBox="0 0 18 18"><rect x="1" y="5" width="6" height="3.400" fill="#d7d7db"/><rect x="9" y="5" width="6" height="3.400" fill="#d7d7db"/><rect x="2" y="10" width="5" height="6" fill="#d7d7db"/><rect x="9" y="10" width="5" height="6" fill="#d7d7db"/><path d="M8 5C5.500 4.600 4.600 3 5.300 1.800 6.200 0.500 7.600 1.500 8 3 8.400 1.500 9.800 0.500 10.700 1.800 11.400 3 10.500 4.600 8 5Z" fill="#b4b4b6"/><circle cx="16" cy="2.300" r="3" fill="#04b0f3"/></svg>
<div class="a" style="left:1333px;top:39px;width:28px;height:28px;border-radius:2px;background:#7d7d7e"></div>
<svg style="left:1340px;top:46px" width="14" height="14" viewBox="0 0 14 14"><path d="M1.500 2H12.500M1.500 7H12.500M1.500 12H12.500" stroke="#e4e4e5" stroke-width="1.900" stroke-linecap="butt"/></svg>
<!-- history panel -->
<div class="a" style="left:1349px;top:73px;width:17px;height:655px;background:#1e1e22;"></div>
<div class="a" style="left:1351px;top:91px;width:14px;height:599px;background:#79797a;"></div>
<svg style="left:1353px;top:715px" width="9" height="6" viewBox="0 0 9 6"><path d="M0.800 0.800L4.500 4.500L8.200 0.800" stroke="#808082" stroke-width="1.600" fill="none"/></svg>
<div class="a" style="left:1093px;top:71px;width:268px;height:641px;background:#4a4a4f;box-shadow:0 0 0 1px rgba(12,12,13,.12),0 1px 5px rgba(0,0,0,.28);"></div>
<svg style="left:1337.800px;top:61.200px" width="18" height="10.500" viewBox="0 0 18 10.500"><path d="M0 10.500L9 0.300L18 10.500Z" fill="#4a4a4f"/></svg>
<svg style="left:1108px;top:85px" width="9" height="12" viewBox="0 0 9 12"><path d="M7.400 1L2 6L7.400 11" stroke="#f9f9fa" stroke-width="1.900" fill="none" stroke-linecap="round" stroke-linejoin="round"/></svg>
<span class="t" style="left:1208.3px;top:85.84px;font-size:12px;color:#f9f9fa;letter-spacing:0.079px;">History</span>
<div class="a" style="left:1093px;top:111px;width:268px;height:1px;background:#5f5f63;"></div>
<div class="a" style="left:1344px;top:112px;width:17px;height:559px;background:#38383d;"></div>
<div class="a" style="left:1345px;top:129px;width:15px;height:240px;background:#858586;"></div>
<div class="a" style="left:1345px;top:112px;width:15px;height:17px;background:#2f2f33;"></div>
<div class="a" style="left:1345px;top:654px;width:15px;height:17px;background:#2f2f33;"></div>
<svg style="left:1348px;top:117px" width="9" height="6" viewBox="0 0 9 6"><path d="M0.800 5.200L4.500 1.500L8.200 5.200" stroke="#858587" stroke-width="1.600" fill="none"/></svg>
<svg style="left:1348px;top:660px" width="9" height="6" viewBox="0 0 9 6"><path d="M0.800 0.800L4.500 4.500L8.200 0.800" stroke="#858587" stroke-width="1.600" fill="none"/></svg>
<div class="a" style="left:1093px;top:172px;width:251px;height:1px;background:#5f5f63;"></div>
<div class="a" style="left:1093px;top:233px;width:251px;height:1px;background:#5f5f63;"></div>
<svg style="left:1105px;top:123px" width="16" height="14" viewBox="0 0 16 14"><rect x="1" y="1" width="14" height="12" rx="2" stroke="#f9f9fa" stroke-width="1.800" fill="none"/><path d="M8 1V13" stroke="#f9f9fa" stroke-width="1.600"/><path d="M3.500 4H6M3.500 6.200H6M3.500 8.400H6" stroke="#f9f9fa" stroke-width="1"/></svg>
<span class="t" style="left:1129.3px;top:124.84px;font-size:12px;color:#f9f9fa;letter-spacing:-0.159px;">View History Sidebar</span>
<svg style="left:1105px;top:146px" width="16" height="16" viewBox="0 0 16 16"><path d="M2.300 5.500A6.600 6.600 0 1 1 1.900 10.300" stroke="#f9f9fa" stroke-width="1.700" fill="none" stroke-linecap="round"/><path d="M1.200 1.800V6H5.400" stroke="#f9f9fa" stroke-width="1.700" fill="none" stroke-linecap="round" stroke-linejoin="round"/><path d="M8.500 4.300V8.300L6.800 10.200" stroke="#f9f9fa" stroke-width="1.500" fill="none" stroke-linecap="round" stroke-linejoin="round"/></svg>
<span class="t" style="left:1129.3px;top:148.84px;font-size:12px;color:#f9f9fa;letter-spacing:-0.205px;">Clear Recent History...</span>
<svg style="left:1105px;top:186px" width="16" height="11" viewBox="0 0 16 11"><path d="M2.500 8.500V2.500A2 2 0 0 1 4.500 0.500H11.500A2 2 0 0 1 13.500 2.500V8.500H16V10.500H0V8.500Z" fill="#f9f9fa"/></svg>
<span class="t" style="left:1129.3px;top:185.84px;font-size:12px;color:#f9f9fa;letter-spacing:-0.307px;">Recently Closed Tabs</span>
<svg style="left:1322px;top:185px" width="7" height="12" viewBox="0 0 7 12"><path d="M1.200 1L5.800 6L1.200 11" stroke="#d0d0d2" stroke-width="1.600" fill="none" stroke-linecap="round" stroke-linejoin="round"/></svg>
<svg style="left:1105px;top:208px" width="16" height="14" viewBox="0 0 16 14"><rect x="1" y="1" width="14" height="12" rx="2" stroke="#f9f9fa" stroke-width="1.800" fill="none"/><path d="M1 4.500H15" stroke="#f9f9fa" stroke-width="1.600"/></svg>
<span class="t" style="left:1129.3px;top:209.84px;font-size:12px;color:#f9f9fa;letter-spacing:-0.160px;">Recently Closed Windows</span>
<svg style="left:1322px;top:209px" width="7" height="12" viewBox="0 0 7 12"><path d="M1.200 1L5.800 6L1.200 11" stroke="#d0d0d2" stroke-width="1.600" fill="none" stroke-linecap="round" stroke-linejoin="round"/></svg>
<span class="t" style="left:1105.3px;top:246.84px;font-size:12px;color:#adadb1;letter-spacing:-0.157px;">Recent History</span>
<svg style="left:1105px;top:268px" width="16" height="16" viewBox="0 0 16 16"><circle cx="8" cy="8" r="8" fill="#fff"/><circle cx="8" cy="8" r="5.600" stroke="#3a3a3e" stroke-width="1.200" fill="none"/><ellipse cx="8" cy="8" rx="2.500" ry="5.600" stroke="#3a3a3e" stroke-width="1.100" fill="none"/><path d="M2.800 6H13.200M2.800 10H13.200" stroke="#3a3a3e" stroke-width="1.100"/></svg>
<span class="t" style="left:1129.3px;top:270.54px;font-size:12px;color:#f9f9fa;letter-spacing:-0.479px;">4366644a9515f37e7bf463d394ec647d....</span>
<svg style="left:1105px;top:292px" width="16" height="16" viewBox="0 0 48 48"><circle cx="24" cy="24" r="24" fill="#fff"/><g transform="translate(24 24) scale(0.7) translate(-24 -24)"><path fill="#EA4335" d="M24 9.500c3.540 0 6.710 1.220 9.210 3.600l6.850-6.850C35.900 2.380 30.470 0 24 0 14.620 0 6.510 5.380 2.560 13.220l7.980 6.190C12.430 13.720 17.740 9.500 24 9.500z"/><path fill="#4285F4" d="M46.980 24.550c0-1.570-.15-3.090-.38-4.550H24v9.020h12.940c-.58 2.960-2.260 5.480-4.780 7.180l7.730 6c4.510-4.180 7.090-10.360 7.090-17.650z"/><path fill="#FBBC05" d="M10.530 28.590c-.48-1.450-.76-2.990-.76-4.590s.27-3.140.76-4.590l-7.980-6.190C.92 16.460 0 20.120 0 24c0 3.880.92 7.540 2.560 10.780l7.970-6.190z"/><path fill="#34A853" d="M24 48c6.480 0 11.930-2.130 15.890-5.810l-7.730-6c-2.150 1.450-4.920 2.300-8.160 2.300-6.260 0-11.570-4.220-13.470-9.910l-7.980 6.190C6.510 42.620 14.620 48 24 48z"/></g></svg>
<span class="t" style="left:1129.3px;top:294.54px;font-size:12px;color:#f9f9fa;letter-spacing:-0.206px;">windows 10 wallpapers 4k - Google S...</span>
<svg style="left:1105px;top:316px" width="16" height="16" viewBox="0 0 48 48"><circle cx="24" cy="24" r="24" fill="#fff"/><g transform="translate(24 24) scale(0.7) translate(-24 -24)"><path fill="#EA4335" d="M24 9.500c3.540 0 6.710 1.220 9.210 3.600l6.850-6.850C35.900 2.380 30.470 0 24 0 14.620 0 6.510 5.380 2.560 13.220l7.980 6.190C12.430 13.720 17.740 9.500 24 9.500z"/><path fill="#4285F4" d="M46.980 24.550c0-1.570-.15-3.090-.38-4.550H24v9.020h12.940c-.58 2.960-2.260 5.480-4.780 7.180l7.730 6c4.510-4.180 7.090-10.360 7.090-17.650z"/><path fill="#FBBC05" d="M10.530 28.590c-.48-1.450-.76-2.990-.76-4.590s.27-3.140.76-4.590l-7.980-6.190C.92 16.460 0 20.120 0 24c0 3.880.92 7.540 2.560 10.780l7.970-6.190z"/><path fill="#34A853" d="M24 48c6.480 0 11.930-2.130 15.890-5.810l-7.730-6c-2.150 1.450-4.920 2.300-8.160 2.300-6.260 0-11.570-4.220-13.470-9.910l-7.980 6.190C6.510 42.620 14.620 48 24 48z"/></g></svg>
<span class="t" style="left:1129.3px;top:318.54px;font-size:12px;color:#f9f9fa;letter-spacing:-0.206px;">windows 10 wallpapers 4k - Google S...</span>
<svg style="left:1105px;top:340px" width="16" height="16" viewBox="0 0 48 48"><circle cx="24" cy="24" r="24" fill="#fff"/><g transform="translate(24 24) scale(0.7) translate(-24 -24)"><path fill="#EA4335" d="M24 9.500c3.540 0 6.710 1.220 9.210 3.600l6.850-6.850C35.900 2.380 30.470 0 24 0 14.620 0 6.510 5.380 2.560 13.220l7.980 6.190C12.430 13.720 17.740 9.500 24 9.500z"/><path fill="#4285F4" d="M46.980 24.550c0-1.570-.15-3.090-.38-4.550H24v9.020h12.940c-.58 2.960-2.260 5.480-4.780 7.180l7.730 6c4.510-4.180 7.090-10.360 7.090-17.650z"/><path fill="#FBBC05" d="M10.530 28.590c-.48-1.450-.76-2.990-.76-4.590s.27-3.140.76-4.590l-7.980-6.190C.92 16.460 0 20.120 0 24c0 3.880.92 7.540 2.560 10.780l7.970-6.190z"/><path fill="#34A853" d="M24 48c6.480 0 11.930-2.130 15.890-5.810l-7.730-6c-2.150 1.450-4.920 2.300-8.160 2.300-6.260 0-11.570-4.220-13.470-9.910l-7.980 6.190C6.510 42.620 14.620 48 24 48z"/></g></svg>
<span class="t" style="left:1129.3px;top:342.54px;font-size:12px;color:#f9f9fa;letter-spacing:-0.206px;">windows 10 wallpapers 4k - Google S...</span>
<svg style="left:1105px;top:364px" width="16" height="16" viewBox="0 0 16 16"><circle cx="8" cy="8" r="8" fill="#fff"/><circle cx="8" cy="8" r="5.600" stroke="#3a3a3e" stroke-width="1.200" fill="none"/><ellipse cx="8" cy="8" rx="2.500" ry="5.600" stroke="#3a3a3e" stroke-width="1.100" fill="none"/><path d="M2.800 6H13.200M2.800 10H13.200" stroke="#3a3a3e" stroke-width="1.100"/></svg>
<span class="t" style="left:1129.3px;top:366.54px;font-size:12px;color:#f9f9fa;letter-spacing:0.261px;">temp-folder.jpg</span>
<svg style="left:1105px;top:388px" width="16" height="16" viewBox="0 0 48 48"><circle cx="24" cy="24" r="24" fill="#fff"/><g transform="translate(24 24) scale(0.7) translate(-24 -24)"><path fill="#EA4335" d="M24 9.500c3.540 0 6.710 1.220 9.210 3.600l6.850-6.850C35.900 2.380 30.470 0 24 0 14.620 0 6.510 5.380 2.560 13.220l7.980 6.190C12.430 13.720 17.740 9.500 24 9.500z"/><path fill="#4285F4" d="M46.980 24.550c0-1.570-.15-3.090-.38-4.550H24v9.020h12.940c-.58 2.960-2.260 5.480-4.780 7.180l7.730 6c4.510-4.180 7.090-10.360 7.090-17.650z"/><path fill="#FBBC05" d="M10.530 28.590c-.48-1.450-.76-2.990-.76-4.590s.27-3.140.76-4.590l-7.980-6.190C.92 16.460 0 20.120 0 24c0 3.880.92 7.540 2.560 10.780l7.970-6.190z"/><path fill="#34A853" d="M24 48c6.480 0 11.930-2.130 15.890-5.810l-7.730-6c-2.150 1.450-4.920 2.300-8.160 2.300-6.260 0-11.570-4.220-13.470-9.910l-7.980 6.190C6.510 42.620 14.620 48 24 48z"/></g></svg>
<span class="t" style="left:1129.3px;top:390.54px;font-size:12px;color:#f9f9fa;letter-spacing:-0.244px;">Temporary Files - Google Search</span>
<svg style="left:1105px;top:412px" width="16" height="16" viewBox="0 0 48 48"><circle cx="24" cy="24" r="24" fill="#fff"/><g transform="translate(24 24) scale(0.7) translate(-24 -24)"><path fill="#EA4335" d="M24 9.500c3.540 0 6.710 1.220 9.210 3.600l6.850-6.850C35.900 2.380 30.470 0 24 0 14.620 0 6.510 5.380 2.560 13.220l7.980 6.190C12.430 13.720 17.740 9.500 24 9.500z"/><path fill="#4285F4" d="M46.980 24.550c0-1.570-.15-3.090-.38-4.550H24v9.020h12.940c-.58 2.960-2.260 5.480-4.780 7.180l7.730 6c4.510-4.180 7.090-10.360 7.090-17.650z"/><path fill="#FBBC05" d="M10.530 28.590c-.48-1.450-.76-2.990-.76-4.590s.27-3.140.76-4.590l-7.980-6.190C.92 16.460 0 20.120 0 24c0 3.880.92 7.540 2.560 10.780l7.970-6.190z"/><path fill="#34A853" d="M24 48c6.480 0 11.930-2.130 15.890-5.810l-7.730-6c-2.150 1.450-4.920 2.300-8.160 2.300-6.260 0-11.570-4.220-13.470-9.910l-7.980 6.190C6.510 42.620 14.620 48 24 48z"/></g></svg>
<span class="t" style="left:1129.3px;top:414.54px;font-size:12px;color:#f9f9fa;letter-spacing:-0.244px;">Temporary Files - Google Search</span>
<svg style="left:1105px;top:436px" width="16" height="16" viewBox="0 0 48 48"><circle cx="24" cy="24" r="24" fill="#fff"/><g transform="translate(24 24) scale(0.7) translate(-24 -24)"><path fill="#EA4335" d="M24 9.500c3.540 0 6.710 1.220 9.210 3.600l6.850-6.850C35.900 2.380 30.470 0 24 0 14.620 0 6.510 5.380 2.560 13.220l7.980 6.190C12.430 13.720 17.740 9.500 24 9.500z"/><path fill="#4285F4" d="M46.980 24.550c0-1.570-.15-3.090-.38-4.550H24v9.020h12.940c-.58 2.960-2.260 5.480-4.780 7.180l7.730 6c4.510-4.180 7.090-10.360 7.090-17.650z"/><path fill="#FBBC05" d="M10.530 28.590c-.48-1.450-.76-2.990-.76-4.590s.27-3.140.76-4.590l-7.980-6.190C.92 16.460 0 20.120 0 24c0 3.880.92 7.540 2.560 10.780l7.970-6.190z"/><path fill="#34A853" d="M24 48c6.480 0 11.930-2.130 15.890-5.810l-7.730-6c-2.150 1.450-4.920 2.300-8.160 2.300-6.260 0-11.570-4.220-13.470-9.910l-7.980 6.190C6.510 42.620 14.620 48 24 48z"/></g></svg>
<span class="t" style="left:1129.3px;top:438.54px;font-size:12px;color:#f9f9fa;letter-spacing:-0.203px;">Delete Temporary Files on Windows ...</span>
<svg style="left:1105px;top:460px" width="16" height="16" viewBox="0 0 48 48"><circle cx="24" cy="24" r="24" fill="#fff"/><g transform="translate(24 24) scale(0.7) translate(-24 -24)"><path fill="#EA4335" d="M24 9.500c3.540 0 6.710 1.220 9.210 3.600l6.850-6.850C35.900 2.380 30.470 0 24 0 14.620 0 6.510 5.380 2.560 13.220l7.980 6.190C12.430 13.720 17.740 9.500 24 9.500z"/><path fill="#4285F4" d="M46.980 24.550c0-1.570-.15-3.090-.38-4.550H24v9.020h12.940c-.58 2.960-2.260 5.480-4.780 7.180l7.730 6c4.510-4.180 7.090-10.360 7.090-17.650z"/><path fill="#FBBC05" d="M10.530 28.590c-.48-1.450-.76-2.990-.76-4.590s.27-3.140.76-4.590l-7.980-6.190C.92 16.460 0 20.120 0 24c0 3.880.92 7.540 2.560 10.780l7.970-6.190z"/><path fill="#34A853" d="M24 48c6.480 0 11.930-2.130 15.890-5.810l-7.730-6c-2.150 1.450-4.920 2.300-8.160 2.300-6.260 0-11.570-4.220-13.470-9.910l-7.980 6.190C6.510 42.620 14.620 48 24 48z"/></g></svg>
<span class="t" style="left:1129.3px;top:462.54px;font-size:12px;color:#f9f9fa;letter-spacing:-0.203px;">Delete Temporary Files on Windows ...</span>
<svg style="left:1105px;top:484px" width="16" height="16" viewBox="0 0 32 32"><rect x="10" y="3.500" width="20" height="4.200" rx="2.100" fill="#1f2bb8"/><rect x="2.500" y="10.500" width="18" height="4.200" rx="2.100" fill="#3dbb8c"/><rect x="16.500" y="17.300" width="13.500" height="4.200" rx="2.100" fill="#f2536f"/><rect x="2.500" y="24.300" width="20" height="4.200" rx="2.100" fill="#1f2bb8"/></svg>
<span class="t" style="left:1129.3px;top:486.54px;font-size:12px;color:#f9f9fa;letter-spacing:-0.093px;">Signup | Quetext</span>
<svg style="left:1105px;top:508px" width="16" height="16" viewBox="0 0 32 32"><rect x="10" y="3.500" width="20" height="4.200" rx="2.100" fill="#1f2bb8"/><rect x="2.500" y="10.500" width="18" height="4.200" rx="2.100" fill="#3dbb8c"/><rect x="16.500" y="17.300" width="13.500" height="4.200" rx="2.100" fill="#f2536f"/><rect x="2.500" y="24.300" width="20" height="4.200" rx="2.100" fill="#1f2bb8"/></svg>
<span class="t" style="left:1129.3px;top:510.54px;font-size:12px;color:#f9f9fa;letter-spacing:-0.148px;">Plagiarism Checker | Quetext</span>
<svg style="left:1105px;top:532px" width="16" height="16" viewBox="0 0 32 32"><rect x="10" y="3.500" width="20" height="4.200" rx="2.100" fill="#1f2bb8"/><rect x="2.500" y="10.500" width="18" height="4.200" rx="2.100" fill="#3dbb8c"/><rect x="16.500" y="17.300" width="13.500" height="4.200" rx="2.100" fill="#f2536f"/><rect x="2.500" y="24.300" width="20" height="4.200" rx="2.100" fill="#1f2bb8"/></svg>
<span class="t" style="left:1129.3px;top:534.54px;font-size:12px;color:#f9f9fa;letter-spacing:-0.093px;">Signup | Quetext</span>
<svg style="left:1105px;top:556px" width="16" height="16" viewBox="0 0 16 16"><rect x="0" y="1" width="15" height="10.500" fill="#dfeaf7" stroke="#6fa5dd" stroke-width="0.800"/><path d="M0 1L7.500 7L15 1M0 11.500L5.500 5.800M15 11.500L9.500 5.800" stroke="#6fa5dd" stroke-width="0.800" fill="none"/><rect x="7.500" y="7.500" width="8.500" height="8.500" rx="1.500" fill="#d8232a"/><text x="11.750" y="14.300" text-anchor="middle" font-family="Liberation Sans, sans-serif" font-weight="700" font-size="7.200" fill="#fff">@</text></svg>
<span class="t" style="left:1129.3px;top:558.54px;font-size:12px;color:#f9f9fa;letter-spacing:-0.137px;">Email Generator - temp mail, fake e...</span>
<svg style="left:1105px;top:580px" width="16" height="16" viewBox="0 0 48 48"><circle cx="24" cy="24" r="24" fill="#fff"/><g transform="translate(24 24) scale(0.7) translate(-24 -24)"><path fill="#EA4335" d="M24 9.500c3.540 0 6.710 1.220 9.210 3.600l6.850-6.850C35.900 2.380 30.470 0 24 0 14.620 0 6.510 5.380 2.560 13.220l7.980 6.190C12.430 13.720 17.740 9.500 24 9.500z"/><path fill="#4285F4" d="M46.980 24.550c0-1.570-.15-3.090-.38-4.550H24v9.020h12.940c-.58 2.960-2.260 5.480-4.780 7.180l7.730 6c4.510-4.180 7.090-10.360 7.090-17.650z"/><path fill="#FBBC05" d="M10.530 28.590c-.48-1.450-.76-2.990-.76-4.590s.27-3.140.76-4.590l-7.980-6.190C.92 16.460 0 20.120 0 24c0 3.880.92 7.540 2.560 10.780l7.970-6.190z"/><path fill="#34A853" d="M24 48c6.480 0 11.930-2.130 15.890-5.810l-7.730-6c-2.150 1.450-4.920 2.300-8.160 2.300-6.260 0-11.570-4.220-13.470-9.910l-7.980 6.190C6.510 42.620 14.620 48 24 48z"/></g></svg>
<span class="t" style="left:1129.3px;top:582.54px;font-size:12px;color:#f9f9fa;letter-spacing:-0.154px;">fake gmail - Google Search</span>
<svg style="left:1105px;top:604px" width="16" height="16" viewBox="0 0 32 32"><rect x="10" y="3.500" width="20" height="4.200" rx="2.100" fill="#1f2bb8"/><rect x="2.500" y="10.500" width="18" height="4.200" rx="2.100" fill="#3dbb8c"/><rect x="16.500" y="17.300" width="13.500" height="4.200" rx="2.100" fill="#f2536f"/><rect x="2.500" y="24.300" width="20" height="4.200" rx="2.100" fill="#1f2bb8"/></svg>
<span class="t" style="left:1129.3px;top:606.54px;font-size:12px;color:#f9f9fa;letter-spacing:-0.045px;">Login | Quetext</span>
<svg style="left:1105px;top:628px" width="16" height="16" viewBox="0 0 32 32"><rect x="10" y="3.500" width="20" height="4.200" rx="2.100" fill="#1f2bb8"/><rect x="2.500" y="10.500" width="18" height="4.200" rx="2.100" fill="#3dbb8c"/><rect x="16.500" y="17.300" width="13.500" height="4.200" rx="2.100" fill="#f2536f"/><rect x="2.500" y="24.300" width="20" height="4.200" rx="2.100" fill="#1f2bb8"/></svg>
<span class="t" style="left:1129.3px;top:630.54px;font-size:12px;color:#f9f9fa;letter-spacing:-0.035px;">Account Settings</span>
<svg style="left:1105px;top:652px" width="16" height="16" viewBox="0 0 32 32"><rect x="10" y="3.500" width="20" height="4.200" rx="2.100" fill="#1f2bb8"/><rect x="2.500" y="10.500" width="18" height="4.200" rx="2.100" fill="#3dbb8c"/><rect x="16.500" y="17.300" width="13.500" height="4.200" rx="2.100" fill="#f2536f"/><rect x="2.500" y="24.300" width="20" height="4.200" rx="2.100" fill="#1f2bb8"/></svg>
<span class="t" style="left:1129.3px;top:654.54px;font-size:12px;color:#f9f9fa;letter-spacing:-0.316px;">New search</span>
<div class="a" style="left:1093px;top:671px;width:268px;height:41px;background:#5d5d61;border-top:1px solid #6b6b6f;box-sizing:border-box;"></div>
<span class="t" style="left:1105.3px;top:687.24px;font-size:12px;color:#f9f9fa;letter-spacing:-0.000px;">Show All History</span>
<svg style="left:1240px;top:135px" width="100" height="50" viewBox="1240 135 100 50">
<defs><filter id="ash" x="-20%" y="-30%" width="140%" height="170%"><feDropShadow dx="1.500" dy="2" stdDeviation="1.600" flood-color="#000" flood-opacity=".55"/></filter></defs>
<path filter="url(#ash)" fill="#fd4142" d="M1253.400 158.100L1283.900 144.900L1283.500 154.600L1324.200 158.300A4.900 4.900 0 0 1 1323.800 168.100L1282.500 165.000L1281.900 175.100Z"/></svg>
</body></html>
